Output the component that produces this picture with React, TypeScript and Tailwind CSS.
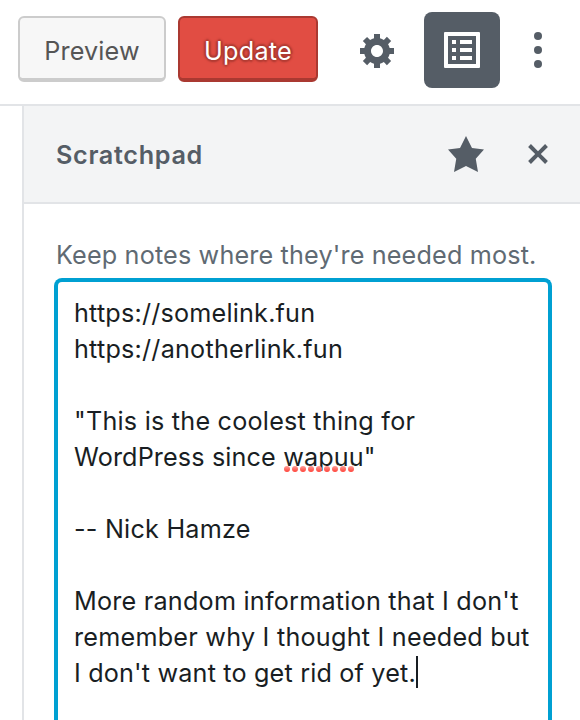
import React from "react";

const notes: { text: string; tracking: string; flagged?: string; rest?: string }[] = [
  { text: "https://somelink.fun", tracking: "tracking-[0.2px]" },
  { text: "https://anotherlink.fun", tracking: "tracking-[0.22px]" },
  { text: "", tracking: "" },
  { text: '"This is the coolest thing for', tracking: "tracking-[0.22px]" },
  { text: "WordPress since ", tracking: "tracking-[0.13px]", flagged: "wapuu", rest: '"' },
  { text: "", tracking: "" },
  { text: "-- Nick Hamze", tracking: "tracking-[0.22px]" },
  { text: "", tracking: "" },
  { text: "More random information that I don't", tracking: "tracking-[0.22px]" },
  { text: "remember why I thought I needed but", tracking: "tracking-[0.23px]" },
  { text: "I don't want to get rid of yet.", tracking: "tracking-[0.17px]" },
];

function GearIcon() {
  return (
    <svg className="size-10 fill-[#555d66]" viewBox="0 0 20 20">
      <path d="M18 12h-2.18c-.17.7-.44 1.35-.81 1.93l1.54 1.54-2.1 2.1-1.54-1.54c-.58.36-1.23.63-1.91.79V19H8v-2.18c-.68-.16-1.33-.43-1.91-.79l-1.54 1.54-2.12-2.12 1.54-1.54c-.36-.58-.63-1.23-.79-1.91H1V9.03h2.17c.16-.7.44-1.35.8-1.94L2.43 5.55l2.1-2.1 1.54 1.54c.58-.37 1.24-.64 1.93-.81V2h3v2.18c.68.16 1.33.43 1.91.79l1.54-1.54 2.12 2.12-1.54 1.54c.36.59.64 1.24.8 1.94H18V12zm-8.5 1.5c1.66 0 3-1.34 3-3s-1.34-3-3-3-3 1.34-3 3 1.34 3 3 3z" />
    </svg>
  );
}

function ListIcon() {
  return (
    <svg className="size-9 fill-white" viewBox="0 0 36 36">
      <path fillRule="evenodd" d="M1 0h34a1 1 0 0 1 1 1v34a1 1 0 0 1-1 1H1a1 1 0 0 1-1-1V1a1 1 0 0 1 1-1zM4 4v28h28V4z" />
      <path d="M8 8h4v4H8zM16 8h12v4H16zM8 16h4v4H8zM16 16h12v4H16zM8 24h4v4H8zM16 24h12v4H16z" />
    </svg>
  );
}

function DotsIcon() {
  return (
    <svg className="h-9 w-2 fill-[#555d66]" viewBox="0 0 8 36">
      <circle cx="4" cy="4" r="4" />
      <circle cx="4" cy="18" r="4" />
      <circle cx="4" cy="32" r="4" />
    </svg>
  );
}

function Squiggle() {
  return (
    <svg className="absolute top-[27px] left-[0.5px] h-[6px] w-[72px]" viewBox="0 0 72 6">
      <defs>
        <linearGradient id="dot" x1="0" y1="0" x2="0" y2="1">
          <stop offset="0" stopColor="#ff9c96" />
          <stop offset="1" stopColor="#ff4238" />
        </linearGradient>
      </defs>
      {[3, 11, 19, 27, 35, 43, 51, 59, 67].map((x) => (
        <circle key={x} cx={x} cy="3" r="3" fill="url(#dot)" />
      ))}
    </svg>
  );
}

export default function App() {
  return (
    <div className="flex h-[720px] w-[580px] flex-col overflow-hidden bg-white font-['Inter','Liberation_Sans',sans-serif] text-[25.2px] font-[380]">
      <header className="flex h-[106px] shrink-0 border-b-2 border-[#e2e4e7] pl-[18px]">
        <button className="mt-4 flex h-[66px] w-[148px] items-center justify-center rounded-[6px] border-2 border-b-4 border-[#cccccc] bg-[#f7f7f7] pt-2 leading-none text-[#555555]">
          <span className="tracking-[0.15px]">Preview</span>
        </button>
        <button className="mt-4 ml-3 flex h-[66px] w-[140px] items-center justify-center rounded-[6px] border-2 border-b-4 border-[#aa3931] bg-[#e14d43] pt-2 leading-none text-white">
          <span className="tracking-[0.3px] [text-shadow:0_-2px_2px_#aa3931,2px_0_2px_#aa3931,0_2px_2px_#aa3931,-2px_0_2px_#aa3931]">Update</span>
        </button>
        <button className="mt-[30px] ml-10 size-10"><GearIcon /></button>
        <button className="mt-3 ml-[26px] flex size-[76px] items-center justify-center rounded-lg bg-[#555d66]"><ListIcon /></button>
        <button className="mt-8 ml-[34px] h-9 w-2"><DotsIcon /></button>
      </header>
      <aside className="ml-[22px] flex min-h-0 flex-1 flex-col border-l-2 border-[#e2e4e7]">
        <div className="flex h-[98px] shrink-0 items-center border-b-2 border-[#e2e4e7] bg-[#f3f4f5] pl-8">
          <h2 className="w-[390px] pt-px leading-9 font-semibold tracking-[0.68px] text-[#555d66]">Scratchpad</h2>
          <svg className="size-10 fill-[#555d66]" viewBox="0 0 20 20">
            <path d="M10 1l3 6 6 .75-4.12 4.62L16 19l-6-3-6 3 1.13-6.63L1 7.75 7 7z" />
          </svg>
          <svg className="ml-8 size-10 fill-[#555d66]" viewBox="0 0 20 20">
            <path d="M14.95 6.46L11.41 10l3.54 3.54-1.41 1.41L10 11.42l-3.53 3.53-1.42-1.42L8.58 10 5.05 6.47l1.42-1.42L10 8.58l3.54-3.53z" />
          </svg>
        </div>
        <p className="mt-[33px] pl-8 leading-9 tracking-[0.16px] whitespace-nowrap text-[#606a73]">Keep notes where they're needed most.</p>
        <div className="mt-[5px] ml-[30px] w-[498px] flex-1 rounded-t-lg border-4 border-b-0 border-[#00a0d2] bg-white pt-[13px] pl-4 text-[#191e23]">
          {notes.map((line, i) => (
            <div key={i} className="flex h-9 items-center leading-9 whitespace-pre">
              <span className={line.tracking}>
                {line.text}
                {line.flagged && (
                  <span className="relative inline-block">
                    {line.flagged}
                    <Squiggle />
                  </span>
                )}
                {line.rest}
              </span>
              {i === notes.length - 1 && <span className="-mt-[2px] h-8 w-[2px] bg-[#191e23]" />}
            </div>
          ))}
        </div>
      </aside>
    </div>
  );
}
